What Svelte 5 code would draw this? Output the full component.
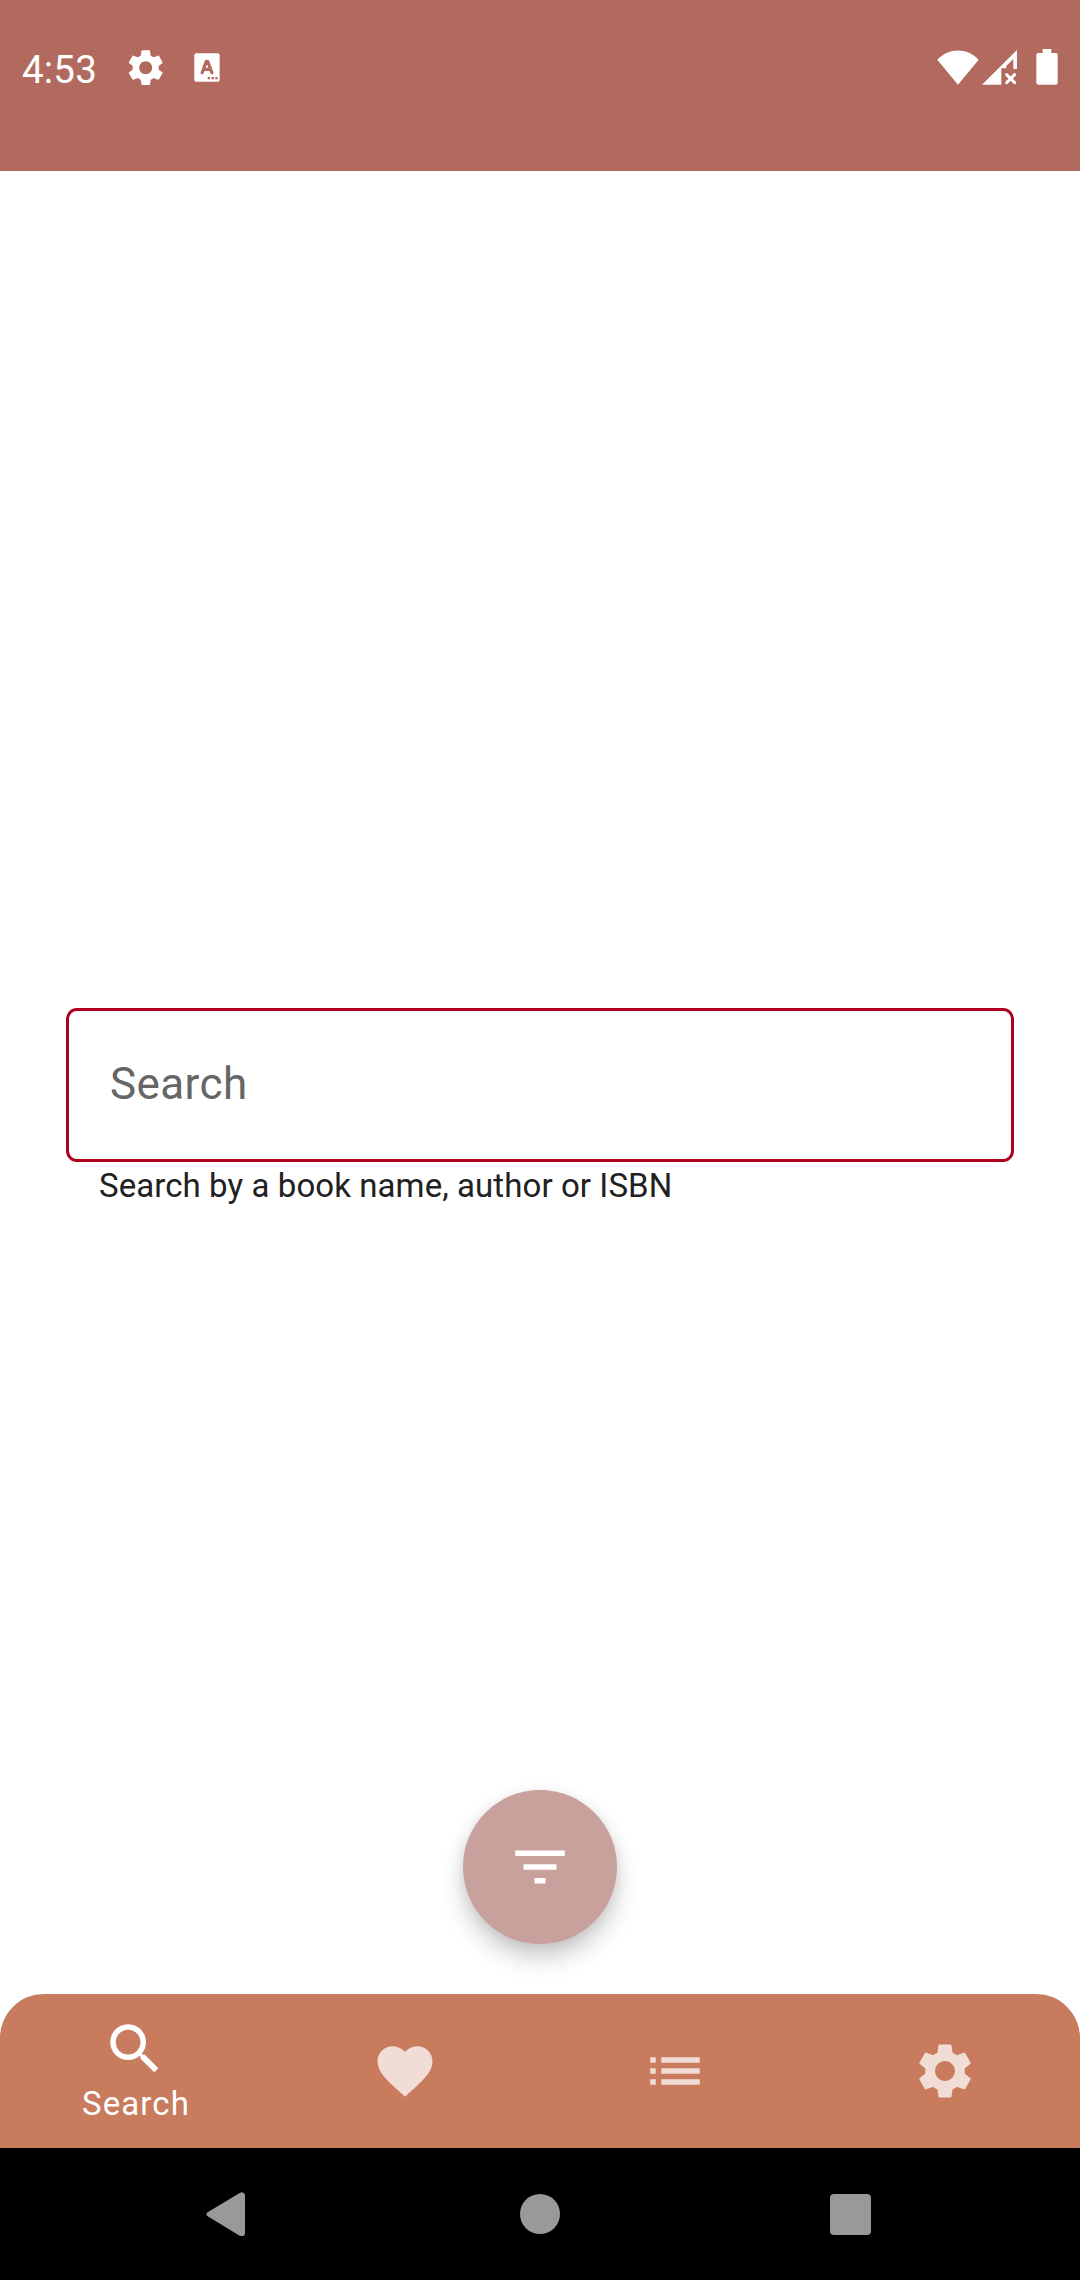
<script>
  const gear =
    'M19.14 12.94c.04-.3.06-.61.06-.94 0-.32-.02-.64-.07-.94l2.03-1.58c.18-.14.23-.41.12-.61l-1.92-3.32c-.12-.22-.37-.29-.59-.22l-2.39.96c-.5-.38-1.03-.7-1.62-.94l-.36-2.54c-.04-.24-.24-.41-.48-.41h-3.84c-.24 0-.43.17-.47.41l-.36 2.54c-.59.24-1.13.57-1.62.94l-2.39-.96c-.22-.08-.47 0-.59.22L2.74 8.87c-.12.21-.08.47.12.61l2.03 1.58c-.05.3-.09.63-.09.94s.02.64.07.94l-2.03 1.58c-.18.14-.23.41-.12.61l1.92 3.32c.12.22.37.29.59.22l2.39-.96c.5.38 1.03.7 1.62.94l.36 2.54c.05.24.24.41.48.41h3.84c.24 0 .44-.17.47-.41l.36-2.54c.59-.24 1.13-.56 1.62-.94l2.39.96c.22.08.47 0 .59-.22l1.92-3.32c.12-.22.07-.47-.12-.61l-2.01-1.58zM12 15.6c-1.98 0-3.6-1.62-3.6-3.6s1.62-3.6 3.6-3.6 3.6 1.62 3.6 3.6-1.62 3.6-3.6 3.6z';
  const tabs = [
    {
      label: 'Search',
      path: 'M15.5 14h-.79l-.28-.27C15.41 12.59 16 11.11 16 9.5 16 5.91 13.09 3 9.5 3S3 5.91 3 9.5 5.91 16 9.5 16c1.61 0 3.09-.59 4.23-1.57l.27.28v.79l5 4.99L20.49 19l-4.99-5zm-6 0C7.01 14 5 11.99 5 9.5S7.01 5 9.5 5 14 7.01 14 9.5 11.99 14 9.5 14z'
    },
    {
      label: 'Favorites',
      path: 'M12 21.35l-1.45-1.32C5.4 15.36 2 12.28 2 8.5 2 5.42 4.42 3 7.5 3c1.74 0 3.41.81 4.5 2.09C13.09 3.81 14.76 3 16.5 3 19.58 3 22 5.42 22 8.5c0 3.78-3.4 6.86-8.55 11.54L12 21.35z'
    },
    {
      label: 'Lists',
      path: 'M3 13h2v-2H3v2zm0 4h2v-2H3v2zm0-8h2V7H3v2zm4 4h14v-2H7v2zm0 4h14v-2H7v2zM7 7v2h14V7H7z'
    },
    { label: 'Settings', path: gear }
  ];
  let active = $state(0);
</script>

<div class="screen">
  <header>
    <div class="status">
      <span class="time">4:53</span>
      <svg class="gear" viewBox="0 0 24 24"><path d={gear} /></svg>
      <svg class="keyboard" viewBox="0 0 78 87">
        <rect x="1" y="1" width="76" height="85" rx="6" />
        <path class="cut-line" d="M24.5 59.5 L37 25 H41 L54 59.5 M30 49 H49" />
        <path class="cut" d="M41 72h7v7h-7zM53 72h7v7h-7zM64 72h7v7h-7z" />
      </svg>
      <span class="grow"></span>
      <svg class="wifi" viewBox="0 0 126 105"><path d="M1 29C36-8 90-8 125 29L63 104z" /></svg>
      <svg class="signal" viewBox="0 0 106 105">
        <path d="M0 104L105 0V57H94V27L73 48V55H58V104z" />
        <path class="cross" d="M74 74L98 98M98 74L74 98" />
      </svg>
      <svg class="battery" viewBox="0 0 66 108"><path d="M20 0H46V12H59Q65 12 65 18V101Q65 107 59 107H7Q1 107 1 101V18Q1 12 7 12H20z" /></svg>
    </div>
  </header>

  <main>
    <label class="field"><span>Search</span></label>
    <p class="helper">Search by a book name, author or ISBN</p>
    <button class="fab" aria-label="Filter">
      <svg viewBox="0 0 24 24"><path d="M10 18h4v-2h-4v2zM3 6v2h18V6H3zm3 7h12v-2H6v2z" /></svg>
    </button>
  </main>

  <nav class="tabs">
    {#each tabs as tab, i}
      <button class="tab" class:active={active === i} aria-label={tab.label} onclick={() => (active = i)}>
        <svg viewBox="0 0 24 24"><path d={tab.path} /></svg>
        {#if active === i}<span>{tab.label}</span>{/if}
      </button>
    {/each}
  </nav>

  <footer>
    <svg class="back" viewBox="0 0 117 134"><path d="M5 61L101 3Q107-1 112 2Q117 4 117 10V124Q117 130 112 132Q107 135 101 131L5 73Q-3 67 5 61z" /></svg>
    <span class="home"></span>
    <span class="recents"></span>
  </footer>
</div>

<style>
  :global(body) {
    background: #fff;
  }
  .screen {
    width: 1080px;
    height: 2280px;
    display: flex;
    flex-direction: column;
    overflow: hidden;
    font-family: Roboto, sans-serif;
  }
  svg {
    display: block;
    flex: none;
    fill: currentColor;
  }
  header {
    height: 171px;
    background: #b16a5d;
    color: #fff;
  }
  .status {
    display: flex;
    align-items: center;
    height: 135px;
    padding: 0 21.7px 0 22px;
  }
  .time {
    width: 102.3px;
    font-size: 38.5px;
    line-height: 46px;
    letter-spacing: 0.2px;
    margin-top: 4px;
  }
  .gear {
    width: 43.4px;
    height: 43.4px;
  }
  .keyboard {
    width: 26px;
    height: 29px;
    margin-left: 26px;
  }
  .cut {
    fill: #b16a5d;
  }
  .cut-line {
    fill: none;
    stroke: #b16a5d;
    stroke-width: 9.5;
    stroke-linejoin: round;
    stroke-linecap: round;
  }
  .grow {
    flex: 1;
  }
  .wifi {
    width: 42px;
    height: 35px;
  }
  .signal {
    width: 35.3px;
    height: 35px;
    margin: 0 19.1px 0 2.6px;
  }
  .cross {
    stroke: #fff;
    stroke-width: 9;
    stroke-linecap: round;
  }
  .battery {
    width: 22px;
    height: 36px;
    margin-bottom: 1px;
  }
  main {
    flex: 1;
    padding: 837px 66px 0;
    display: flex;
    flex-direction: column;
  }
  .field {
    box-sizing: border-box;
    height: 154px;
    border: 3px solid #b00020;
    border-radius: 11px;
    padding: 0 0 2px 41px;
    display: flex;
    align-items: center;
    font-size: 44px;
    line-height: 52px;
    letter-spacing: 0.4px;
    color: #666;
  }
  .helper {
    margin: 2px 0 0 33px;
    font-size: 33px;
    line-height: 44px;
    letter-spacing: 0.08px;
    color: #212121;
  }
  .fab {
    width: 154px;
    height: 154px;
    margin: auto auto 50px;
    padding: 0;
    border: 0;
    border-radius: 50%;
    background: #c8a09c;
    color: #fff;
    display: grid;
    place-items: center;
    box-shadow: 0 14px 24px rgba(0, 0, 0, 0.2), 0 2px 12px rgba(0, 0, 0, 0.08);
  }
  .fab svg,
  .tab svg {
    width: 66px;
    height: 66px;
  }
  .tabs {
    height: 154px;
    display: grid;
    grid-template-columns: repeat(4, 1fr);
    background: #c87b5d;
    border-radius: 44px 44px 0 0;
  }
  .tab {
    border: 0;
    padding: 0;
    background: none;
    font: inherit;
    color: #f1ddd6;
    display: flex;
    flex-direction: column;
    align-items: center;
    justify-content: center;
  }
  .tab.active {
    color: #fff;
    justify-content: flex-start;
    padding-top: 22px;
  }
  .tab span {
    font-size: 33px;
    line-height: 40px;
    margin: 2px 0 0 2px;
    letter-spacing: 1.1px;
  }
  footer {
    height: 132px;
    background: #000;
    color: #999;
    display: flex;
    align-items: center;
    padding-left: 206px;
  }
  .back {
    width: 39px;
    height: 44.7px;
  }
  .home {
    width: 40px;
    height: 40px;
    border-radius: 50%;
    background: #999;
    margin-left: 275px;
  }
  .recents {
    width: 41px;
    height: 41px;
    border-radius: 4px;
    background: #999;
    margin-left: 270px;
  }
</style>
